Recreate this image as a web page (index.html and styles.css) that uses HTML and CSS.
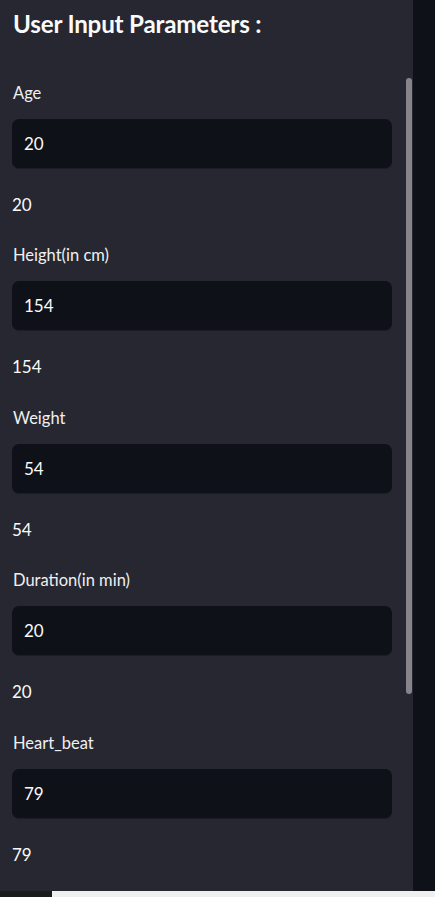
FILE: index.html
```html
<!DOCTYPE html>
<html lang="en">
<head>
<meta charset="utf-8">
<title>User Input Parameters</title>
<link rel="stylesheet" href="styles.css">
</head>
<body>
<div class="page">
  <div class="main">
    <aside class="sidebar">
      <div class="content">
        <h2 class="title">User Input Parameters :</h2>
        <div class="field">
          <label class="label">Age</label>
          <div class="input">20</div>
          <div class="value">20</div>
        </div>
        <div class="field">
          <label class="label">Height(in cm)</label>
          <div class="input">154</div>
          <div class="value">154</div>
        </div>
        <div class="field">
          <label class="label">Weight</label>
          <div class="input">54</div>
          <div class="value">54</div>
        </div>
        <div class="field">
          <label class="label">Duration(in min)</label>
          <div class="input">20</div>
          <div class="value">20</div>
        </div>
        <div class="field">
          <label class="label">Heart_beat</label>
          <div class="input">79</div>
          <div class="value">79</div>
        </div>
      </div>
      <div class="track"><div class="thumb"></div></div>
    </aside>
    <div class="strip"></div>
  </div>
  <div class="bottom">
    <div class="bottom-left"></div>
    <div class="bottom-right"></div>
  </div>
</div>
</body>
</html>
```
FILE: styles.css
```css
html, body {
  margin: 0;
  padding: 0;
  background: #0e1117;
  height: 897px;
  overflow: hidden;
}
.page {
  display: flex;
  flex-direction: column;
  height: 897px;
  font-family: Lato, "Noto Sans", sans-serif;
  color: #fafafa;
}
.main {
  display: flex;
  height: 891px;
}
.sidebar {
  width: 413px;
  background: #262730;
  display: flex;
  padding-left: 12px;
  box-sizing: border-box;
  overflow: hidden;
}
.content {
  width: 380px;
  display: flex;
  flex-direction: column;
  gap: 28.5px;
}
.title {
  margin: 8px 0 14px 1px;
  font-size: 24.2px;
  line-height: 32px;
  font-weight: 700;
  letter-spacing: -0.2px;
}
.field {
  display: flex;
  flex-direction: column;
}
.label {
  font-size: 16.5px;
  line-height: 20px;
  margin-left: 1px;
  color: #f0f0f2;
}
.input {
  margin-top: 16px;
  height: 50px;
  box-sizing: border-box;
  background: #0f1118;
  border-radius: 7px;
  border-bottom: 1px solid #1c1e26;
  padding-left: 12px;
  font-size: 17px;
  line-height: 49px;
}
.value {
  margin-top: 24px;
  font-size: 17px;
  line-height: 24px;
}
.track {
  margin-left: 14px;
  padding-top: 78px;
}
.thumb {
  width: 6px;
  height: 616px;
  background: #85858b;
  border-radius: 3px;
}
.strip {
  flex: 1;
  background: #0e1117;
}
.bottom {
  display: flex;
  height: 6px;
}
.bottom-left {
  width: 52px;
  background: #1b1b1d;
}
.bottom-right {
  flex: 1;
  background: #efefef;
}
```
